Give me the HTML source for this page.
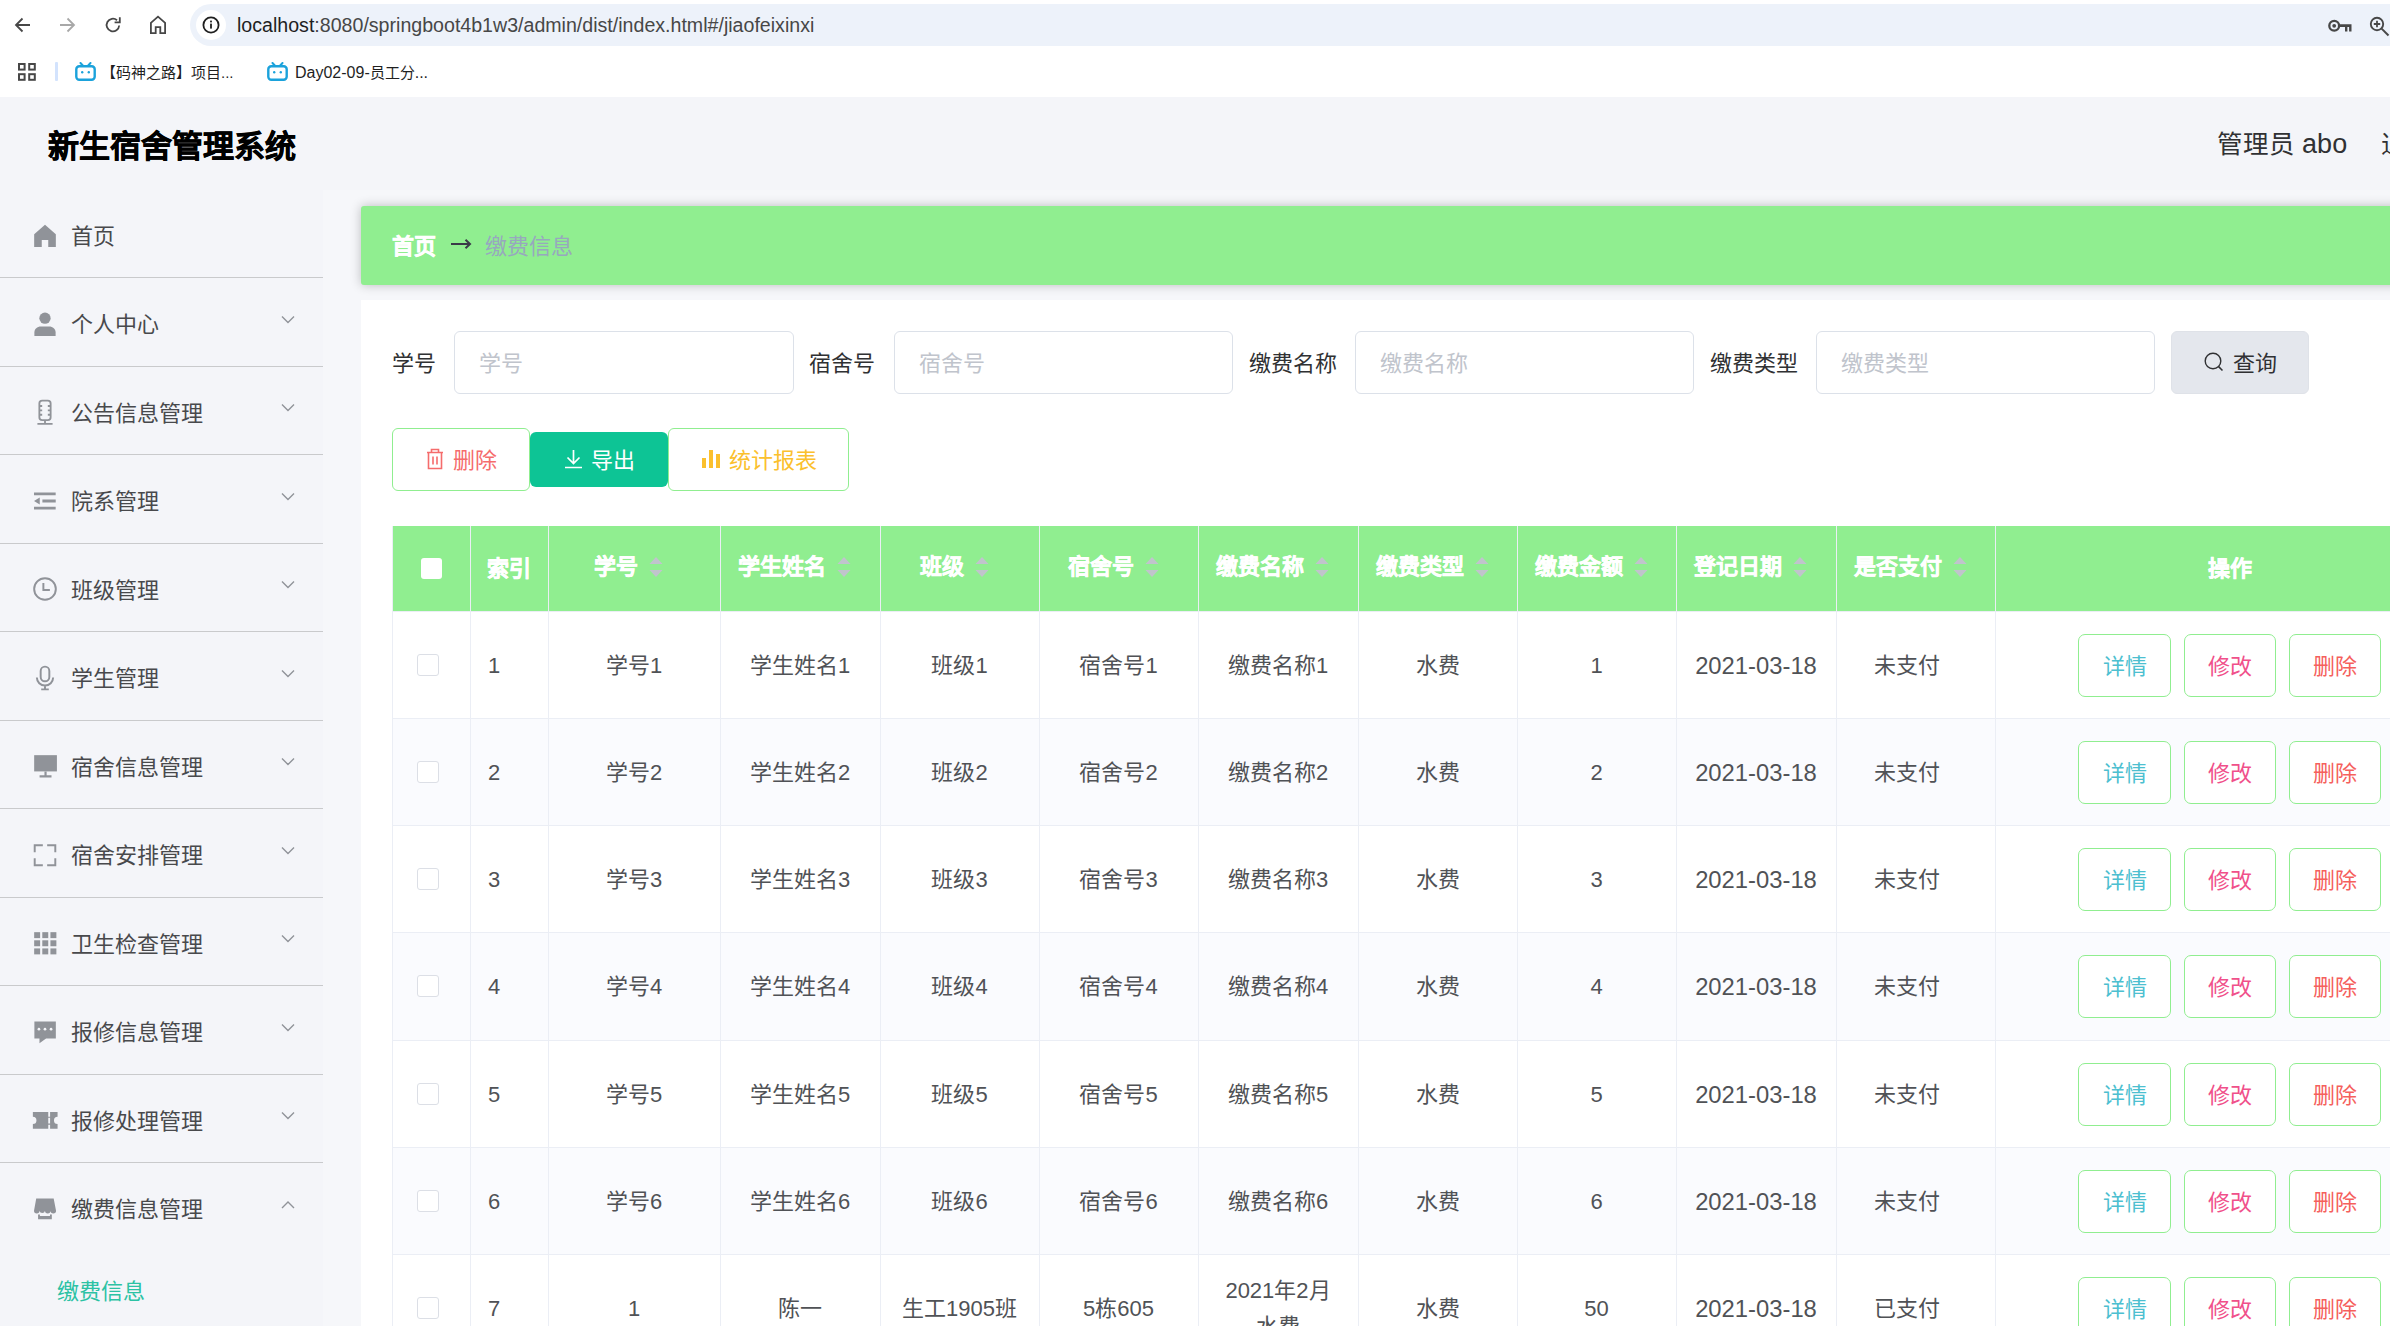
<!DOCTYPE html><html lang="zh-CN"><head><meta charset="utf-8"><title>缴费信息</title><style>
*{box-sizing:border-box;margin:0;padding:0}
html,body{width:2390px;height:1326px;overflow:hidden;background:#fff;font-family:"Liberation Sans",sans-serif}
.abs{position:absolute}
.nw{white-space:nowrap}
#chrome{position:absolute;left:0;top:0;width:2390px;height:97px;background:#fff}
#omni{position:absolute;left:190px;top:4px;width:2260px;height:42px;border-radius:21px;background:#edf2fa}
#url{position:absolute;left:237px;top:13px;font-size:19.6px;line-height:24px;color:#474747;white-space:nowrap}
#url b{font-weight:normal;color:#1f1f1f}
.bm{position:absolute;top:63px;font-size:15px;line-height:20px;color:#1f1f1f;white-space:nowrap}
#page{position:absolute;left:0;top:97px;width:2390px;height:1229px;background:#f4f5f9}
#title{position:absolute;left:48px;top:127.5px;font-size:31px;line-height:38px;font-weight:bold;color:#000;white-space:nowrap;-webkit-text-stroke:0.6px #000}
#user{position:absolute;left:2217px;top:129px;font-size:25.5px;line-height:30px;color:#303133;white-space:nowrap}
#main{position:absolute;left:323px;top:190px;width:2067px;height:1136px;background:#f6f7fa}
#crumb{position:absolute;left:361px;top:206px;width:2100px;height:79px;background:#90ee90;border-radius:3px;box-shadow:0 0 11px rgba(0,0,0,.24)}
#panel{position:absolute;left:361px;top:300px;width:2100px;height:1100px;background:#fff}
.mi{position:absolute;left:0;width:323px;height:89px;border-bottom:1px solid #c9cacc}
.mt{position:absolute;left:71px;font-size:22px;line-height:30px;color:#48494c;white-space:nowrap}
.ic{position:absolute;left:32px;width:26px;height:26px}
.chev{position:absolute;left:281px;width:14px;height:9px}
.lbl{position:absolute;top:348.5px;font-size:22px;line-height:30px;color:#303133;white-space:nowrap}
.inp{position:absolute;top:331px;height:63px;border:1px solid #dce1e9;border-radius:6px;background:#fff}
.ph{position:absolute;left:24px;top:16.5px;font-size:22px;line-height:30px;color:#c0c4cc;white-space:nowrap}
.btn{position:absolute;border:1.5px solid #90ee90;border-radius:6px;background:#fff;white-space:nowrap}
.bt{position:absolute;margin-top:2px;font-size:22px;line-height:30px;white-space:nowrap}
#thead{position:absolute;left:392px;top:526px;width:2000px;height:85px;background:#90ee90}
.th{position:absolute;top:552px;font-size:22px;line-height:30px;font-weight:bold;color:#fff;white-space:nowrap;-webkit-text-stroke:0.45px #fff}
.vl{position:absolute;width:1px;background:#ebeef5}
.hl{position:absolute;height:1px;background:#ebeef5}
.row{position:absolute;left:392px;width:2000px}
.td{position:absolute;font-size:22px;line-height:32px;color:#505256;white-space:nowrap;text-align:center}
.lt{font-size:22px}
.dt{font-size:23.8px}
.cb{position:absolute;width:22px;height:22px;border:1.5px solid #dcdfe6;border-radius:3px;background:#fff}
.ob{position:absolute;width:92px;height:63px;border:1.5px solid #90ee90;border-radius:7px;background:#fff;font-size:22px;line-height:63px;text-align:center;white-space:nowrap}
.sort{position:absolute;width:14px;height:20px}
</style></head><body>
<div id="chrome">
<div id="omni"></div>
<svg class="abs" style="left:13px;top:15px" width="20" height="20" viewBox="0 0 20 20"><path d="M17 10H4M9.5 3.5L3 10l6.5 6.5" fill="none" stroke="#474747" stroke-width="1.8"/></svg>
<svg class="abs" style="left:57px;top:15px" width="20" height="20" viewBox="0 0 20 20"><path d="M3 10h13M10.5 3.5L17 10l-6.5 6.5" fill="none" stroke="#a8a8a8" stroke-width="1.8"/></svg>
<svg class="abs" style="left:103px;top:15px" width="20" height="20" viewBox="0 0 20 20"><path d="M16.2 10.5A6.3 6.3 0 1 1 14 5.2" fill="none" stroke="#474747" stroke-width="1.8"/><path d="M16.8 2.2v5.2h-5.2" fill="none" stroke="#474747" stroke-width="1.8"/></svg>
<svg class="abs" style="left:148px;top:15px" width="20" height="20" viewBox="0 0 20 20"><path d="M2.9 18.2V7.8L10 1.6l7.1 6.2v10.4h-4.8v-6.1H7.7v6.1z" fill="none" stroke="#474747" stroke-width="1.8"/></svg>
<div class="abs" style="left:196px;top:10px;width:30px;height:30px;border-radius:15px;background:#fff"></div>
<svg class="abs" style="left:201px;top:15px" width="20" height="20" viewBox="0 0 20 20"><circle cx="10" cy="10" r="7.6" fill="none" stroke="#1f1f1f" stroke-width="1.8"/><rect x="9.1" y="8.6" width="1.8" height="5" fill="#1f1f1f"/><rect x="9.1" y="5.6" width="1.8" height="1.8" fill="#1f1f1f"/></svg>
<div id="url"><b>localhost</b>:8080/springboot4b1w3/admin/dist/index.html#/jiaofeixinxi</div>
<svg class="abs" style="left:2326px;top:14px" width="28" height="22" viewBox="0 0 28 22"><circle cx="8.2" cy="11.8" r="4.9" fill="none" stroke="#474747" stroke-width="2.3"/><circle cx="8.2" cy="11.8" r="1.9" fill="#474747"/><path d="M12.5 10.3h13v7.3h-2.4v-4.6h-1.7v4.6h-2.4v-4.6h-6.5z" fill="#474747"/></svg>
<svg class="abs" style="left:2368px;top:14.5px" width="24" height="24" viewBox="0 0 24 24"><circle cx="9" cy="9" r="6.2" fill="none" stroke="#474747" stroke-width="1.9"/><path d="M13.6 13.6L20.5 20.5" stroke="#474747" stroke-width="2"/><path d="M9 5.8v6.4M5.8 9h6.4" stroke="#474747" stroke-width="1.8"/></svg>
<svg class="abs" style="left:17px;top:62px" width="20" height="20" viewBox="0 0 20 20"><g fill="none" stroke="#474747" stroke-width="2"><rect x="2" y="2" width="5.6" height="5.6"/><rect x="12.2" y="2" width="5.6" height="5.6"/><rect x="2" y="12.2" width="5.6" height="5.6"/><rect x="12.2" y="12.2" width="5.6" height="5.6"/></g></svg>
<div class="abs" style="left:55px;top:62px;width:3px;height:19px;background:#d3e3fd;border-radius:1px"></div>
<svg class="abs" style="left:75px;top:62px" width="21" height="19" viewBox="0 0 21 19"><path d="M5.5 1l2.3 2.5M15.5 1l-2.3 2.5" stroke="#1ba2db" stroke-width="2" stroke-linecap="round"/><rect x="1.3" y="4.2" width="18.4" height="13.6" rx="3" fill="none" stroke="#1ba2db" stroke-width="2.4"/><circle cx="7.2" cy="10.3" r="1.2" fill="#1ba2db"/><circle cx="13.8" cy="10.3" r="1.2" fill="#1ba2db"/></svg>
<div class="bm" style="left:101px">【码神之路】项目...</div>
<svg class="abs" style="left:267px;top:62px" width="21" height="19" viewBox="0 0 21 19"><path d="M5.5 1l2.3 2.5M15.5 1l-2.3 2.5" stroke="#1ba2db" stroke-width="2" stroke-linecap="round"/><rect x="1.3" y="4.2" width="18.4" height="13.6" rx="3" fill="none" stroke="#1ba2db" stroke-width="2.4"/><circle cx="7.2" cy="10.3" r="1.2" fill="#1ba2db"/><circle cx="13.8" cy="10.3" r="1.2" fill="#1ba2db"/></svg>
<div class="bm" style="left:295px"><span style="font-size:16px">Day02-09-</span>员工分<span style="font-size:16px">...</span></div>
</div>
<div id="page"></div>
<div id="title">新生宿舍管理系统</div>
<div id="user">管理员 <span style="font-size:27px">abo</span></div>
<div class="abs nw" style="left:2381px;top:129px;font-size:25.5px;line-height:30px;color:#303133">退</div>
<div id="main"></div>
<div class="mi" style="top:189.0px"></div>
<svg class="ic" style="top:222.0px" viewBox="0 0 24 24"><path d="M12 2.5L2 11.2V23h7v-6.5h6V23h7V11.2z" fill="#909399"/></svg>
<div class="mt" style="top:221.5px">首页</div>
<div class="mi" style="top:277.5px"></div>
<svg class="ic" style="top:310.5px" viewBox="0 0 24 24"><circle cx="12" cy="6.6" r="5.2" fill="#909399"/><path d="M2.2 23v-3.2c0-3.4 2.6-5.6 6-5.6h7.6c3.4 0 6 2.2 6 5.6V23z" fill="#909399"/></svg>
<div class="mt" style="top:310.0px">个人中心</div>
<svg class="chev" style="top:314.5px" viewBox="0 0 14 9"><path d="M1 1.5l6 6 6-6" fill="none" stroke="#909399" stroke-width="1.4"/></svg>
<div class="mi" style="top:366.0px"></div>
<svg class="ic" style="top:399.0px" viewBox="0 0 24 24"><rect x="6.8" y="1.5" width="10.4" height="18" rx="2.6" fill="none" stroke="#909399" stroke-width="1.7"/><path d="M6.8 6.5h2.6M6.8 10.5h2.6M6.8 14.5h2.6M14.6 6.5h2.6M14.6 10.5h2.6M14.6 14.5h2.6M12 19.5v3M5 23h14" stroke="#909399" stroke-width="1.7" fill="none"/></svg>
<div class="mt" style="top:398.5px">公告信息管理</div>
<svg class="chev" style="top:403.0px" viewBox="0 0 14 9"><path d="M1 1.5l6 6 6-6" fill="none" stroke="#909399" stroke-width="1.4"/></svg>
<div class="mi" style="top:454.5px"></div>
<svg class="ic" style="top:487.5px" viewBox="0 0 24 24"><path d="M1.85 5.4h20M9.6 12h12.3M1.85 18.5h20" stroke="#909399" stroke-width="2.6"/><path d="M1.85 12l5.3-3.3v6.6z" fill="#909399"/></svg>
<div class="mt" style="top:487.0px">院系管理</div>
<svg class="chev" style="top:491.5px" viewBox="0 0 14 9"><path d="M1 1.5l6 6 6-6" fill="none" stroke="#909399" stroke-width="1.4"/></svg>
<div class="mi" style="top:543.0px"></div>
<svg class="ic" style="top:576.0px" viewBox="0 0 24 24"><circle cx="12" cy="12" r="10" fill="none" stroke="#909399" stroke-width="1.8"/><path d="M10.5 6.5v6.5h6" fill="none" stroke="#909399" stroke-width="1.8"/></svg>
<div class="mt" style="top:575.5px">班级管理</div>
<svg class="chev" style="top:580.0px" viewBox="0 0 14 9"><path d="M1 1.5l6 6 6-6" fill="none" stroke="#909399" stroke-width="1.4"/></svg>
<div class="mi" style="top:631.5px"></div>
<svg class="ic" style="top:664.5px" viewBox="0 0 24 24"><rect x="8" y="1.5" width="8" height="13.5" rx="4" fill="none" stroke="#909399" stroke-width="1.8"/><path d="M4.5 11.5a7.5 7.5 0 0 0 15 0M12 19v3.5M8.5 22.5h7" fill="none" stroke="#909399" stroke-width="1.8"/></svg>
<div class="mt" style="top:664.0px">学生管理</div>
<svg class="chev" style="top:668.5px" viewBox="0 0 14 9"><path d="M1 1.5l6 6 6-6" fill="none" stroke="#909399" stroke-width="1.4"/></svg>
<div class="mi" style="top:720.0px"></div>
<svg class="ic" style="top:753.0px" viewBox="0 0 24 24"><rect x="2" y="2" width="21" height="15" fill="#909399"/><path d="M12.5 17v3.5M7 21.5h11" stroke="#909399" stroke-width="2"/></svg>
<div class="mt" style="top:752.5px">宿舍信息管理</div>
<svg class="chev" style="top:757.0px" viewBox="0 0 14 9"><path d="M1 1.5l6 6 6-6" fill="none" stroke="#909399" stroke-width="1.4"/></svg>
<div class="mi" style="top:808.5px"></div>
<svg class="ic" style="top:841.5px" viewBox="0 0 24 24"><path d="M2.5 9.5V3h7.5M14 3h7.5v6.5M21.5 15v6.5H14M10 21.5H2.5V15" fill="none" stroke="#909399" stroke-width="1.8"/></svg>
<div class="mt" style="top:841.0px">宿舍安排管理</div>
<svg class="chev" style="top:845.5px" viewBox="0 0 14 9"><path d="M1 1.5l6 6 6-6" fill="none" stroke="#909399" stroke-width="1.4"/></svg>
<div class="mi" style="top:897.0px"></div>
<svg class="ic" style="top:930.0px" viewBox="0 0 24 24"><g fill="#909399"><rect x="2" y="2" width="5.5" height="5.5"/><rect x="9.5" y="2" width="5.5" height="5.5"/><rect x="17" y="2" width="5.5" height="5.5"/><rect x="2" y="9.5" width="5.5" height="5.5"/><rect x="9.5" y="9.5" width="5.5" height="5.5"/><rect x="17" y="9.5" width="5.5" height="5.5"/><rect x="2" y="17" width="5.5" height="5.5"/><rect x="9.5" y="17" width="5.5" height="5.5"/><rect x="17" y="17" width="5.5" height="5.5"/></g></svg>
<div class="mt" style="top:929.5px">卫生检查管理</div>
<svg class="chev" style="top:934.0px" viewBox="0 0 14 9"><path d="M1 1.5l6 6 6-6" fill="none" stroke="#909399" stroke-width="1.4"/></svg>
<div class="mi" style="top:985.5px"></div>
<svg class="ic" style="top:1018.5px" viewBox="0 0 24 24"><path d="M2.2 2.2h19.8V18H13l-6.1 4.3V18H2.2z" fill="#909399"/><circle cx="6.4" cy="9.4" r="1.25" fill="#f4f5f9"/><circle cx="12" cy="9.4" r="1.25" fill="#f4f5f9"/><circle cx="17.6" cy="9.4" r="1.25" fill="#f4f5f9"/></svg>
<div class="mt" style="top:1018.0px">报修信息管理</div>
<svg class="chev" style="top:1022.5px" viewBox="0 0 14 9"><path d="M1 1.5l6 6 6-6" fill="none" stroke="#909399" stroke-width="1.4"/></svg>
<div class="mi" style="top:1074.0px"></div>
<svg class="ic" style="top:1107.0px" viewBox="0 0 24 24"><path d="M0.8 4.6H15V20.1H0.8V15.7A3.3 3.3 0 0 0 0.8 9.1z M16.7 4.6H23.6V9.1A3.3 3.3 0 0 0 23.6 15.7V20.1H16.7z M15 8.9h1.7v1H15z M15 15.3h1.7v1H15z" fill="#909399"/></svg>
<div class="mt" style="top:1106.5px">报修处理管理</div>
<svg class="chev" style="top:1111.0px" viewBox="0 0 14 9"><path d="M1 1.5l6 6 6-6" fill="none" stroke="#909399" stroke-width="1.4"/></svg>
<div class="mi" style="top:1162.5px"></div>
<svg class="ic" style="top:1195.5px" viewBox="0 0 24 24"><path d="M3.9 2.3H20L22.2 13.5A2.55 2.55 0 0 1 17.1 13.5A2.55 2.55 0 0 1 12 13.5A2.55 2.55 0 0 1 6.95 13.5A2.55 2.55 0 0 1 1.85 13.5z" fill="#909399"/><path d="M5.6 17.1h1.7v1.3h9.3v-1.3h1.7v4.4H5.6z" fill="#909399"/></svg>
<div class="mt" style="top:1195.0px">缴费信息管理</div>
<svg class="chev" style="top:1199.5px" viewBox="0 0 14 9"><path d="M1 8L7 2l6 6" fill="none" stroke="#909399" stroke-width="1.4"/></svg>
<div class="abs" style="left:0;top:1250.5px;width:323px;height:2px;background:#f4f5f9"></div>
<div class="abs nw" style="left:57px;top:1276.5px;font-size:22px;line-height:30px;color:#2cc2a4">缴费信息</div>
<div id="crumb"></div>
<div class="abs nw" style="left:392px;top:231.5px;font-size:22px;line-height:30px;font-weight:bold;color:#fff;-webkit-text-stroke:0.45px #fff">首页</div>
<svg class="abs" style="left:450px;top:236px" width="22" height="16" viewBox="0 0 22 16"><path d="M1 8h19M15.5 3.8l4.5 4.2-4.5 4.2" fill="none" stroke="#3a3a48" stroke-width="2"/></svg>
<div class="abs nw" style="left:485px;top:231.5px;font-size:22px;line-height:30px;color:#97a8be">缴费信息</div>
<div id="panel"></div>
<div class="lbl" style="left:392px">学号</div>
<div class="inp" style="left:454px;width:340px"><div class="ph">学号</div></div>
<div class="lbl" style="left:809px">宿舍号</div>
<div class="inp" style="left:894px;width:339px"><div class="ph">宿舍号</div></div>
<div class="lbl" style="left:1249px">缴费名称</div>
<div class="inp" style="left:1355px;width:339px"><div class="ph">缴费名称</div></div>
<div class="lbl" style="left:1710px">缴费类型</div>
<div class="inp" style="left:1816px;width:339px"><div class="ph">缴费类型</div></div>
<div class="abs" style="left:2171px;top:331px;width:138px;height:63px;border-radius:6px;background:#e4e7ed;border:1px solid #dfe2e8"></div>
<svg class="abs" style="left:2204px;top:351.5px" width="21" height="21" viewBox="0 0 21 21"><circle cx="9" cy="9" r="7.8" fill="none" stroke="#303133" stroke-width="1.4"/><path d="M14.6 14.6l3.9 3.9" stroke="#303133" stroke-width="1.5"/></svg>
<div class="abs nw" style="left:2233px;top:348.5px;font-size:22px;line-height:30px;color:#303133">查询</div>
<div class="btn" style="left:392px;top:428px;width:138px;height:63px"></div>
<svg class="abs" style="left:425px;top:448px" width="20" height="22" viewBox="0 0 20 22"><path d="M2 4.5h16M6.5 4.5V1.5h7v3M3.5 4.5v16h13v-16M8 8.5v8M12 8.5v8" fill="none" stroke="#f56c6c" stroke-width="1.6"/></svg>
<div class="bt" style="left:453px;top:444px;color:#f56c6c">删除</div>
<div class="abs" style="left:530px;top:432px;width:138px;height:55px;border-radius:6px;background:#0dc495"></div>
<svg class="abs" style="left:564px;top:449px" width="19" height="20" viewBox="0 0 19 20"><path d="M9.5 1v13M3.5 8.5l6 6 6-6M1 18.5h17" fill="none" stroke="#fff" stroke-width="1.7"/></svg>
<div class="bt" style="left:591px;top:444px;color:#fff">导出</div>
<div class="btn" style="left:668px;top:428px;width:181px;height:63px"></div>
<svg class="abs" style="left:701px;top:449px" width="20" height="19" viewBox="0 0 20 19"><rect x="1" y="9" width="4" height="10" fill="#fbc02d"/><rect x="8" y="1" width="4" height="18" fill="#fbc02d"/><rect x="15" y="5" width="4" height="14" fill="#fbc02d"/></svg>
<div class="bt" style="left:729px;top:444px;color:#fbc02d">统计报表</div>
<div id="thead"></div>
<div class="vl" style="left:392px;top:526px;height:85px;background:#ebeef5"></div>
<div class="vl" style="left:470px;top:526px;height:85px;background:#ebeef5"></div>
<div class="vl" style="left:548px;top:526px;height:85px;background:#ebeef5"></div>
<div class="vl" style="left:720px;top:526px;height:85px;background:#ebeef5"></div>
<div class="vl" style="left:880px;top:526px;height:85px;background:#ebeef5"></div>
<div class="vl" style="left:1039px;top:526px;height:85px;background:#ebeef5"></div>
<div class="vl" style="left:1198px;top:526px;height:85px;background:#ebeef5"></div>
<div class="vl" style="left:1358px;top:526px;height:85px;background:#ebeef5"></div>
<div class="vl" style="left:1517px;top:526px;height:85px;background:#ebeef5"></div>
<div class="vl" style="left:1676px;top:526px;height:85px;background:#ebeef5"></div>
<div class="vl" style="left:1836px;top:526px;height:85px;background:#ebeef5"></div>
<div class="vl" style="left:1995px;top:526px;height:85px;background:#ebeef5"></div>
<div class="abs" style="left:421px;top:558px;width:21px;height:21px;background:#fff;border-radius:3px"></div>
<div class="th" style="left:487.0px;top:554px">索引</div>
<div class="th" style="left:594.0px;top:552px">学号</div>
<svg class="sort" style="left:649.0px;top:557px" viewBox="0 0 14 20"><path d="M7 0L13.5 7H.5z" fill="#c0c4cc"/><path d="M7 20L13.5 13H.5z" fill="#c0c4cc"/></svg>
<div class="th" style="left:738.0px;top:552px">学生姓名</div>
<svg class="sort" style="left:837.0px;top:557px" viewBox="0 0 14 20"><path d="M7 0L13.5 7H.5z" fill="#c0c4cc"/><path d="M7 20L13.5 13H.5z" fill="#c0c4cc"/></svg>
<div class="th" style="left:919.5px;top:552px">班级</div>
<svg class="sort" style="left:974.5px;top:557px" viewBox="0 0 14 20"><path d="M7 0L13.5 7H.5z" fill="#c0c4cc"/><path d="M7 20L13.5 13H.5z" fill="#c0c4cc"/></svg>
<div class="th" style="left:1067.5px;top:552px">宿舍号</div>
<svg class="sort" style="left:1144.5px;top:557px" viewBox="0 0 14 20"><path d="M7 0L13.5 7H.5z" fill="#c0c4cc"/><path d="M7 20L13.5 13H.5z" fill="#c0c4cc"/></svg>
<div class="th" style="left:1216.0px;top:552px">缴费名称</div>
<svg class="sort" style="left:1315.0px;top:557px" viewBox="0 0 14 20"><path d="M7 0L13.5 7H.5z" fill="#c0c4cc"/><path d="M7 20L13.5 13H.5z" fill="#c0c4cc"/></svg>
<div class="th" style="left:1375.5px;top:552px">缴费类型</div>
<svg class="sort" style="left:1474.5px;top:557px" viewBox="0 0 14 20"><path d="M7 0L13.5 7H.5z" fill="#c0c4cc"/><path d="M7 20L13.5 13H.5z" fill="#c0c4cc"/></svg>
<div class="th" style="left:1534.5px;top:552px">缴费金额</div>
<svg class="sort" style="left:1633.5px;top:557px" viewBox="0 0 14 20"><path d="M7 0L13.5 7H.5z" fill="#c0c4cc"/><path d="M7 20L13.5 13H.5z" fill="#c0c4cc"/></svg>
<div class="th" style="left:1694.0px;top:552px">登记日期</div>
<svg class="sort" style="left:1793.0px;top:557px" viewBox="0 0 14 20"><path d="M7 0L13.5 7H.5z" fill="#c0c4cc"/><path d="M7 20L13.5 13H.5z" fill="#c0c4cc"/></svg>
<div class="th" style="left:1853.5px;top:552px">是否支付</div>
<svg class="sort" style="left:1952.5px;top:557px" viewBox="0 0 14 20"><path d="M7 0L13.5 7H.5z" fill="#c0c4cc"/><path d="M7 20L13.5 13H.5z" fill="#c0c4cc"/></svg>
<div class="th" style="left:2208px;top:554px">操作</div>
<div class="row" style="top:611px;height:107px;background:#fff"></div>
<div class="cb" style="left:417px;top:654.0px"></div>
<div class="td" style="left:488px;top:650px;text-align:left"><span class="lt">1</span></div>
<div class="td" style="left:548px;width:172px;top:650px">学号<span class="lt">1</span></div>
<div class="td" style="left:720px;width:160px;top:650px">学生姓名<span class="lt">1</span></div>
<div class="td" style="left:880px;width:159px;top:650px">班级<span class="lt">1</span></div>
<div class="td" style="left:1039px;width:159px;top:650px">宿舍号<span class="lt">1</span></div>
<div class="td" style="left:1198px;width:160px;top:650px">缴费名称<span class="lt">1</span></div>
<div class="td" style="left:1358px;width:159px;top:650px">水费</div>
<div class="td" style="left:1517px;width:159px;top:650px"><span class="lt">1</span></div>
<div class="td" style="left:1676px;width:160px;top:650px"><span class="dt">2021-03-18</span></div>
<div class="td" style="left:1827px;width:159px;top:650px">未支付</div>
<div class="ob" style="left:2078px;top:633.5px;width:93px;color:#4dbfd0">详情</div>
<div class="ob" style="left:2184px;top:633.5px;width:92px;color:#f0508a">修改</div>
<div class="ob" style="left:2289px;top:633.5px;width:92px;color:#f5605c">删除</div>
<div class="row" style="top:718px;height:107px;background:#fafbfe"></div>
<div class="cb" style="left:417px;top:761.0px"></div>
<div class="td" style="left:488px;top:757px;text-align:left"><span class="lt">2</span></div>
<div class="td" style="left:548px;width:172px;top:757px">学号<span class="lt">2</span></div>
<div class="td" style="left:720px;width:160px;top:757px">学生姓名<span class="lt">2</span></div>
<div class="td" style="left:880px;width:159px;top:757px">班级<span class="lt">2</span></div>
<div class="td" style="left:1039px;width:159px;top:757px">宿舍号<span class="lt">2</span></div>
<div class="td" style="left:1198px;width:160px;top:757px">缴费名称<span class="lt">2</span></div>
<div class="td" style="left:1358px;width:159px;top:757px">水费</div>
<div class="td" style="left:1517px;width:159px;top:757px"><span class="lt">2</span></div>
<div class="td" style="left:1676px;width:160px;top:757px"><span class="dt">2021-03-18</span></div>
<div class="td" style="left:1827px;width:159px;top:757px">未支付</div>
<div class="ob" style="left:2078px;top:740.5px;width:93px;color:#4dbfd0">详情</div>
<div class="ob" style="left:2184px;top:740.5px;width:92px;color:#f0508a">修改</div>
<div class="ob" style="left:2289px;top:740.5px;width:92px;color:#f5605c">删除</div>
<div class="row" style="top:825px;height:107px;background:#fff"></div>
<div class="cb" style="left:417px;top:868.0px"></div>
<div class="td" style="left:488px;top:864px;text-align:left"><span class="lt">3</span></div>
<div class="td" style="left:548px;width:172px;top:864px">学号<span class="lt">3</span></div>
<div class="td" style="left:720px;width:160px;top:864px">学生姓名<span class="lt">3</span></div>
<div class="td" style="left:880px;width:159px;top:864px">班级<span class="lt">3</span></div>
<div class="td" style="left:1039px;width:159px;top:864px">宿舍号<span class="lt">3</span></div>
<div class="td" style="left:1198px;width:160px;top:864px">缴费名称<span class="lt">3</span></div>
<div class="td" style="left:1358px;width:159px;top:864px">水费</div>
<div class="td" style="left:1517px;width:159px;top:864px"><span class="lt">3</span></div>
<div class="td" style="left:1676px;width:160px;top:864px"><span class="dt">2021-03-18</span></div>
<div class="td" style="left:1827px;width:159px;top:864px">未支付</div>
<div class="ob" style="left:2078px;top:847.5px;width:93px;color:#4dbfd0">详情</div>
<div class="ob" style="left:2184px;top:847.5px;width:92px;color:#f0508a">修改</div>
<div class="ob" style="left:2289px;top:847.5px;width:92px;color:#f5605c">删除</div>
<div class="row" style="top:932px;height:108px;background:#fafbfe"></div>
<div class="cb" style="left:417px;top:975.0px"></div>
<div class="td" style="left:488px;top:971px;text-align:left"><span class="lt">4</span></div>
<div class="td" style="left:548px;width:172px;top:971px">学号<span class="lt">4</span></div>
<div class="td" style="left:720px;width:160px;top:971px">学生姓名<span class="lt">4</span></div>
<div class="td" style="left:880px;width:159px;top:971px">班级<span class="lt">4</span></div>
<div class="td" style="left:1039px;width:159px;top:971px">宿舍号<span class="lt">4</span></div>
<div class="td" style="left:1198px;width:160px;top:971px">缴费名称<span class="lt">4</span></div>
<div class="td" style="left:1358px;width:159px;top:971px">水费</div>
<div class="td" style="left:1517px;width:159px;top:971px"><span class="lt">4</span></div>
<div class="td" style="left:1676px;width:160px;top:971px"><span class="dt">2021-03-18</span></div>
<div class="td" style="left:1827px;width:159px;top:971px">未支付</div>
<div class="ob" style="left:2078px;top:954.5px;width:93px;color:#4dbfd0">详情</div>
<div class="ob" style="left:2184px;top:954.5px;width:92px;color:#f0508a">修改</div>
<div class="ob" style="left:2289px;top:954.5px;width:92px;color:#f5605c">删除</div>
<div class="row" style="top:1040px;height:107px;background:#fff"></div>
<div class="cb" style="left:417px;top:1083.0px"></div>
<div class="td" style="left:488px;top:1079px;text-align:left"><span class="lt">5</span></div>
<div class="td" style="left:548px;width:172px;top:1079px">学号<span class="lt">5</span></div>
<div class="td" style="left:720px;width:160px;top:1079px">学生姓名<span class="lt">5</span></div>
<div class="td" style="left:880px;width:159px;top:1079px">班级<span class="lt">5</span></div>
<div class="td" style="left:1039px;width:159px;top:1079px">宿舍号<span class="lt">5</span></div>
<div class="td" style="left:1198px;width:160px;top:1079px">缴费名称<span class="lt">5</span></div>
<div class="td" style="left:1358px;width:159px;top:1079px">水费</div>
<div class="td" style="left:1517px;width:159px;top:1079px"><span class="lt">5</span></div>
<div class="td" style="left:1676px;width:160px;top:1079px"><span class="dt">2021-03-18</span></div>
<div class="td" style="left:1827px;width:159px;top:1079px">未支付</div>
<div class="ob" style="left:2078px;top:1062.5px;width:93px;color:#4dbfd0">详情</div>
<div class="ob" style="left:2184px;top:1062.5px;width:92px;color:#f0508a">修改</div>
<div class="ob" style="left:2289px;top:1062.5px;width:92px;color:#f5605c">删除</div>
<div class="row" style="top:1147px;height:107px;background:#fafbfe"></div>
<div class="cb" style="left:417px;top:1190.0px"></div>
<div class="td" style="left:488px;top:1186px;text-align:left"><span class="lt">6</span></div>
<div class="td" style="left:548px;width:172px;top:1186px">学号<span class="lt">6</span></div>
<div class="td" style="left:720px;width:160px;top:1186px">学生姓名<span class="lt">6</span></div>
<div class="td" style="left:880px;width:159px;top:1186px">班级<span class="lt">6</span></div>
<div class="td" style="left:1039px;width:159px;top:1186px">宿舍号<span class="lt">6</span></div>
<div class="td" style="left:1198px;width:160px;top:1186px">缴费名称<span class="lt">6</span></div>
<div class="td" style="left:1358px;width:159px;top:1186px">水费</div>
<div class="td" style="left:1517px;width:159px;top:1186px"><span class="lt">6</span></div>
<div class="td" style="left:1676px;width:160px;top:1186px"><span class="dt">2021-03-18</span></div>
<div class="td" style="left:1827px;width:159px;top:1186px">未支付</div>
<div class="ob" style="left:2078px;top:1169.5px;width:93px;color:#4dbfd0">详情</div>
<div class="ob" style="left:2184px;top:1169.5px;width:92px;color:#f0508a">修改</div>
<div class="ob" style="left:2289px;top:1169.5px;width:92px;color:#f5605c">删除</div>
<div class="row" style="top:1254px;height:107px;background:#fff"></div>
<div class="cb" style="left:417px;top:1297.0px"></div>
<div class="td" style="left:488px;top:1293px;text-align:left"><span class="lt">7</span></div>
<div class="td" style="left:548px;width:172px;top:1293px"><span class="lt">1</span></div>
<div class="td" style="left:720px;width:160px;top:1293px">陈一</div>
<div class="td" style="left:880px;width:159px;top:1293px">生工<span class="lt">1905</span>班</div>
<div class="td" style="left:1039px;width:159px;top:1293px"><span class="lt">5</span>栋<span class="lt">605</span></div>
<div class="td" style="left:1198px;width:160px;top:1273.3px;line-height:36px"><span class="lt">2021</span>年<span class="lt">2</span>月<br>水费</div>
<div class="td" style="left:1358px;width:159px;top:1293px">水费</div>
<div class="td" style="left:1517px;width:159px;top:1293px"><span class="lt">50</span></div>
<div class="td" style="left:1676px;width:160px;top:1293px"><span class="dt">2021-03-18</span></div>
<div class="td" style="left:1827px;width:159px;top:1293px">已支付</div>
<div class="ob" style="left:2078px;top:1276.5px;width:93px;color:#4dbfd0">详情</div>
<div class="ob" style="left:2184px;top:1276.5px;width:92px;color:#f0508a">修改</div>
<div class="ob" style="left:2289px;top:1276.5px;width:92px;color:#f5605c">删除</div>
<div class="hl" style="left:392px;top:718px;width:2000px"></div>
<div class="hl" style="left:392px;top:825px;width:2000px"></div>
<div class="hl" style="left:392px;top:932px;width:2000px"></div>
<div class="hl" style="left:392px;top:1040px;width:2000px"></div>
<div class="hl" style="left:392px;top:1147px;width:2000px"></div>
<div class="hl" style="left:392px;top:1254px;width:2000px"></div>
<div class="hl" style="left:392px;top:1361px;width:2000px"></div>
<div class="hl" style="left:392px;top:611px;width:2000px"></div>
<div class="vl" style="left:392px;top:611px;height:720px"></div>
<div class="vl" style="left:470px;top:611px;height:720px"></div>
<div class="vl" style="left:548px;top:611px;height:720px"></div>
<div class="vl" style="left:720px;top:611px;height:720px"></div>
<div class="vl" style="left:880px;top:611px;height:720px"></div>
<div class="vl" style="left:1039px;top:611px;height:720px"></div>
<div class="vl" style="left:1198px;top:611px;height:720px"></div>
<div class="vl" style="left:1358px;top:611px;height:720px"></div>
<div class="vl" style="left:1517px;top:611px;height:720px"></div>
<div class="vl" style="left:1676px;top:611px;height:720px"></div>
<div class="vl" style="left:1836px;top:611px;height:720px"></div>
<div class="vl" style="left:1995px;top:611px;height:720px"></div>
</body></html>
